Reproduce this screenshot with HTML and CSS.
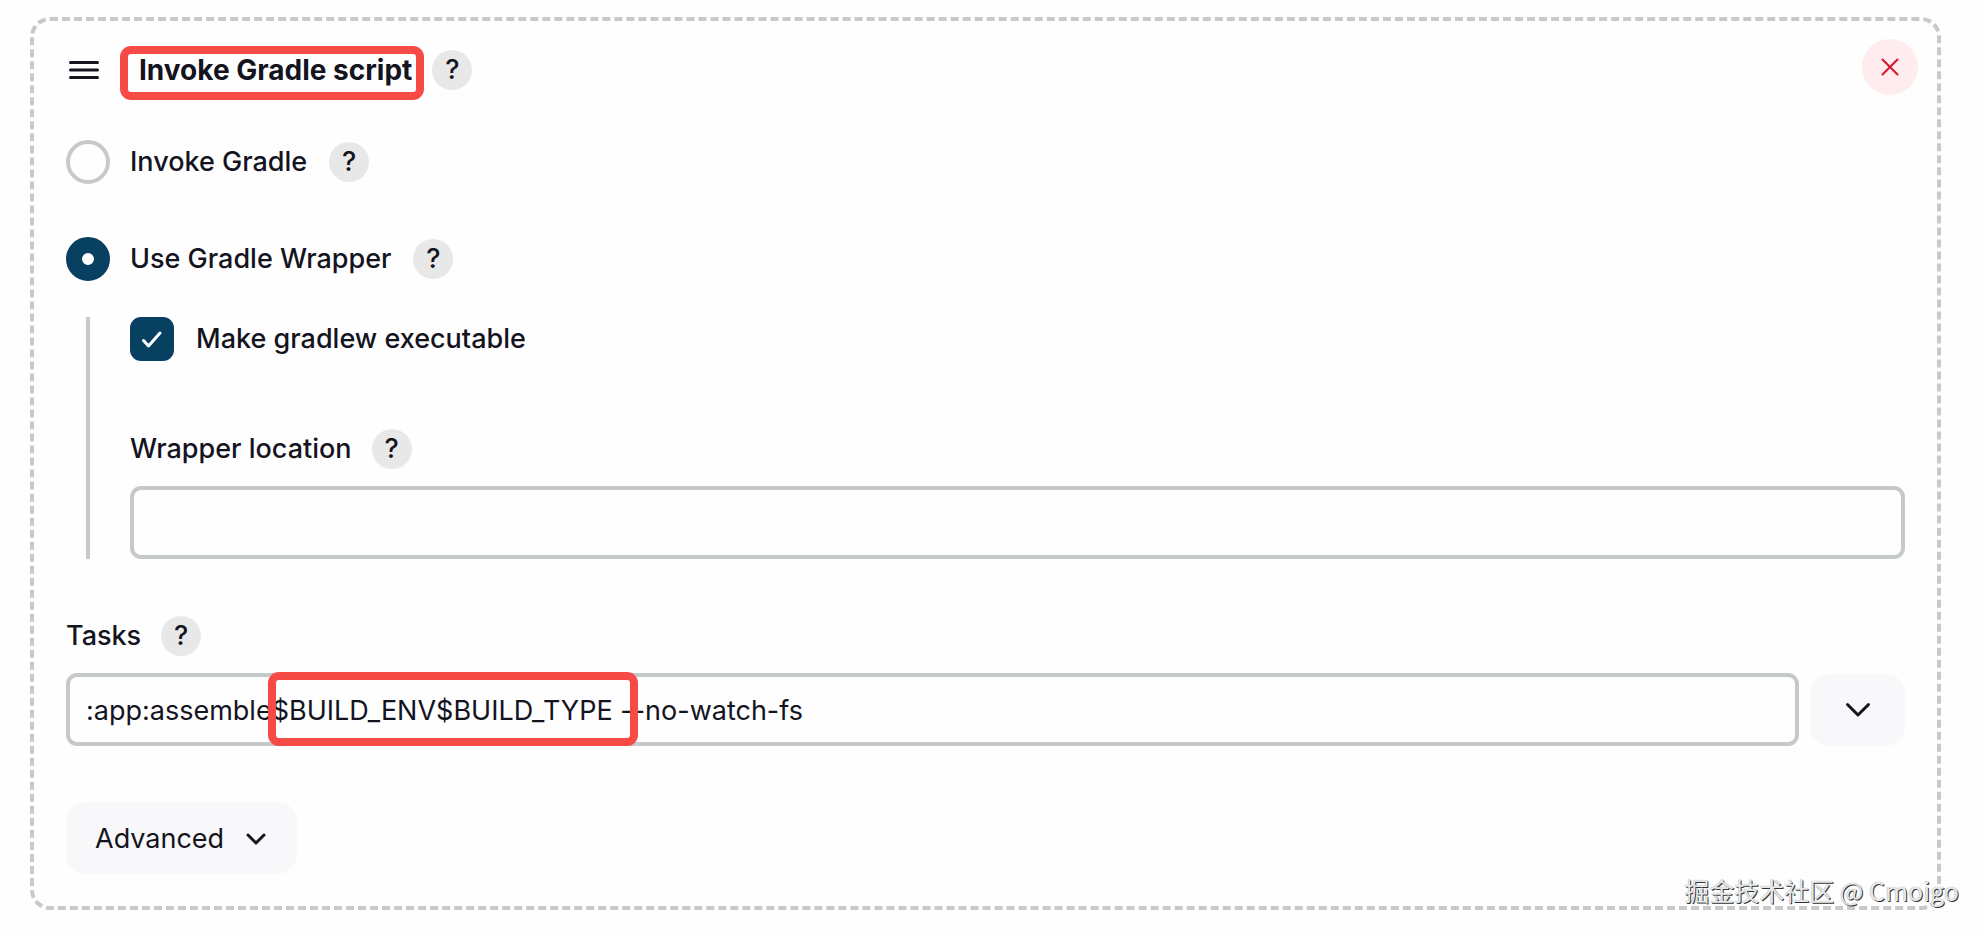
FILE: index.html
```html
<!DOCTYPE html>
<html lang="en">
<head>
<meta charset="utf-8">
<title>Invoke Gradle script</title>
<link rel="stylesheet" href="styles.css">
</head>
<body>
<form class="build-step">
  <div class="step-header">
    <div class="step-heading">
      <svg class="drag-handle" width="30" height="18" viewBox="0 0 30 18" aria-hidden="true">
        <path d="M1.5 1.5h27M1.5 9h27M1.5 16.5h27" />
      </svg>
      <h1 class="step-title">Invoke Gradle script<span class="highlight title-highlight"></span></h1>
      <button type="button" class="help-btn">?</button>
    </div>
    <button type="button" class="delete-btn" aria-label="Delete">
      <svg width="18" height="18" viewBox="0 0 18 18"><path d="M1.5 1.5l15 15M16.5 1.5l-15 15" /></svg>
    </button>
  </div>

  <div class="step-body">
    <div class="option-row">
      <input type="radio" id="use-gradle" name="gradle-mode" class="radio">
      <label for="use-gradle">Invoke Gradle</label>
      <button type="button" class="help-btn">?</button>
    </div>
    <div class="option-row">
      <input type="radio" id="use-wrapper" name="gradle-mode" class="radio" checked>
      <label for="use-wrapper">Use Gradle Wrapper</label>
      <button type="button" class="help-btn">?</button>
    </div>

    <div class="nested">
      <div class="check-row">
        <span class="check-wrap">
          <input type="checkbox" id="executable" class="checkbox" checked>
          <svg class="check-mark" width="20" height="17" viewBox="0 0 20 17"><path d="M1.5 9.5l5 5.5L18 2" /></svg>
        </span>
        <label for="executable">Make gradlew executable</label>
      </div>
      <div class="field-label">
        <label for="wrapper-location">Wrapper location</label>
        <button type="button" class="help-btn">?</button>
      </div>
      <input type="text" id="wrapper-location" class="text-input">
    </div>

    <div class="field-label">
      <label for="tasks">Tasks</label>
      <button type="button" class="help-btn">?</button>
    </div>
    <div class="tasks-row">
      <div class="tasks-field">
        <input type="text" id="tasks" class="text-input" value=":app:assemble$BUILD_ENV$BUILD_TYPE --no-watch-fs" spellcheck="false">
        <span class="highlight tasks-highlight"></span>
      </div>
      <button type="button" class="soft-btn expand-btn" aria-label="Expand">
        <svg width="26" height="16" viewBox="0 0 26 16"><path d="M2.5 2.5L13 13L23.5 2.5" /></svg>
      </button>
    </div>

    <button type="button" class="soft-btn advanced-btn">
      Advanced
      <svg width="20" height="12" viewBox="0 0 20 12"><path d="M2 2l8 8l8-8" /></svg>
    </button>
  </div>
</form>
<div class="watermark">掘金技术社区 @ Cmoigo</div>
</body>
</html>
```
FILE: styles.css
```css
* {
  box-sizing: border-box;
}
body {
  margin: 0;
  padding: 17px 45px 24px 30px;
  background: #fefefe;
  color: #14141f;
  font-family: Inter, "Liberation Sans", sans-serif;
  font-size: 27px;
  font-weight: 500;
  line-height: 40px;
}
button, input {
  margin: 0;
  font: inherit;
  color: inherit;
}
button {
  display: flex;
  align-items: center;
  justify-content: center;
  padding: 0;
  border: none;
  cursor: pointer;
}
svg {
  fill: none;
  stroke: currentColor;
  stroke-width: 3;
  stroke-linecap: round;
  stroke-linejoin: round;
  flex-shrink: 0;
}
.build-step {
  border: 4px dashed #c8caca;
  border-radius: 20px;
}
.step-header {
  display: flex;
  justify-content: space-between;
  padding: 18px 19px 0 35px;
}
.step-heading {
  display: flex;
  align-items: center;
  padding-top: 6px;
}
.step-title {
  position: relative;
  margin: 0 20px 0 40px;
  font-size: 28px;
  font-weight: 700;
}
.help-btn {
  width: 40px;
  height: 40px;
  border-radius: 50%;
  background: #e8e8e8;
  font-size: 27px;
  font-weight: 500;
}
.delete-btn {
  width: 56px;
  height: 56px;
  border-radius: 50%;
  background: #ffecee;
  color: #d9142b;
}
.delete-btn svg {
  stroke-width: 2;
}
.step-body {
  padding: 45px 32px 32px;
}
.option-row, .check-row {
  display: flex;
  align-items: center;
  height: 44px;
}
.option-row {
  margin-bottom: 53px;
}
.option-row label {
  margin: 0 22px 0 20px;
}
.check-row label {
  margin-left: 22px;
}
.radio, .checkbox {
  appearance: none;
  display: block;
  width: 44px;
  height: 44px;
  background: #fefefe;
  border: 4px solid #c8caca;
}
.radio {
  border-radius: 50%;
}
.radio:checked {
  border: 16px solid #084061;
}
.checkbox {
  border-radius: 11px;
}
.checkbox:checked {
  background: #084061;
  border-color: #084061;
}
.check-wrap {
  position: relative;
}
.check-mark {
  position: absolute;
  left: 12px;
  top: 14px;
  color: #fff;
  pointer-events: none;
}
.nested {
  margin: -17px 0 57px 20px;
  padding-left: 40px;
  border-left: 4px solid #c8caca;
}
.nested .field-label {
  margin-top: 68px;
}
.field-label {
  display: flex;
  align-items: center;
  gap: 20px;
  margin-bottom: 17px;
}
.text-input {
  display: block;
  width: 100%;
  height: 73px;
  padding: 1px 16px 0;
  border: 4px solid #c5c9ca;
  border-radius: 11px;
  background: #fefefe;
  font-weight: 400;
  font-feature-settings: "calt" 0;
}
.tasks-row {
  display: flex;
  gap: 11px;
  margin-bottom: 56px;
}
.tasks-field {
  position: relative;
  flex: 1;
}
.soft-btn {
  height: 72px;
  border-radius: 20px;
  background: #f8f8fb;
}
.expand-btn {
  width: 95px;
  margin-top: 1px;
}
.advanced-btn {
  gap: 22px;
  padding: 2px 31px 0 29px;
  font-weight: 400;
}
/* red callout frames */
.highlight {
  position: absolute;
  border: 8px solid #f54a45;
  border-radius: 11px;
  pointer-events: none;
}
.title-highlight {
  inset: -4px -12px -10px -19px;
}
.tasks-highlight {
  left: 202px;
  top: -1px;
  width: 370px;
  height: 74px;
}
.watermark {
  position: absolute;
  right: 27px;
  bottom: 26px;
  color: #e8e8e8;
  font-family: "Noto Sans CJK SC", sans-serif;
  font-size: 25px;
  font-weight: 400;
  line-height: 36px;
  text-shadow: 1px 1px 0 #333, 0 0 1px #999;
}
```
